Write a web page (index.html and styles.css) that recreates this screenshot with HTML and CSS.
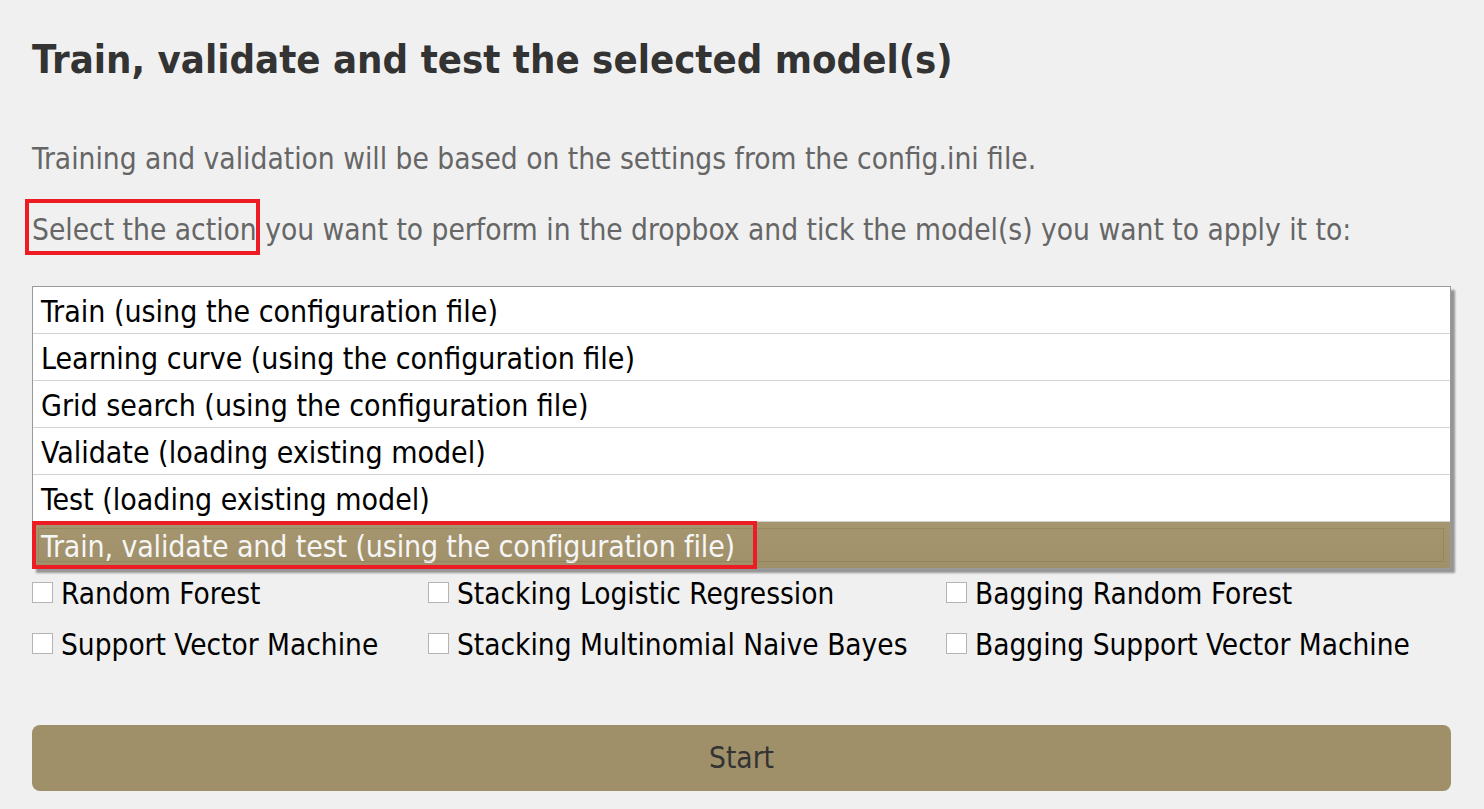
FILE: index.html
```html
<!DOCTYPE html>
<html lang="en">
<head>
<meta charset="utf-8">
<title>Train, validate and test</title>
<link rel="stylesheet" href="styles.css">
</head>
<body>
<div class="page">
  <h1 class="title">Train, validate and test the selected model(s)</h1>
  <p class="intro">Training and validation will be based on the settings from the config.ini file.</p>
  <p class="intro second"><span class="mark">Select the action</span> you want to perform in the dropbox and tick the model(s) you want to apply it to:</p>
  <ul class="actions">
    <li class="action">Train (using the configuration file)</li>
    <li class="action">Learning curve (using the configuration file)</li>
    <li class="action">Grid search (using the configuration file)</li>
    <li class="action">Validate (loading existing model)</li>
    <li class="action">Test (loading existing model)</li>
    <li class="action selected">Train, validate and test (using the configuration file)</li>
  </ul>
  <div class="models">
    <label class="model"><span class="box"></span>Random Forest</label>
    <label class="model"><span class="box"></span>Stacking Logistic Regression</label>
    <label class="model"><span class="box"></span>Bagging Random Forest</label>
    <label class="model"><span class="box"></span>Support Vector Machine</label>
    <label class="model"><span class="box"></span>Stacking Multinomial Naive Bayes</label>
    <label class="model"><span class="box"></span>Bagging Support Vector Machine</label>
  </div>
  <button class="start" type="button">Start</button>
</div>
</body>
</html>
```

FILE: styles.css
```css
html, body {
  margin: 0;
  padding: 0;
  background: #f0f0f0;
}

body {
  font-family: "DejaVu Sans Condensed", "DejaVu Sans", sans-serif;
  font-stretch: semi-condensed;
  font-size: 29.6px;
  color: #000;
}

.page {
  padding: 35px 33px 0 32px;
}

.title {
  margin: 0;
  font-size: 39.75px;
  line-height: 48px;
  font-weight: bold;
  color: #333;
}

.intro {
  margin: 58px 0 0;
  line-height: 36px;
  color: #666;
}

.intro.second {
  margin-top: 35px;
}

.mark {
  position: relative;
}

.mark::after {
  content: "";
  position: absolute;
  left: -7px;
  right: -3px;
  top: -14px;
  bottom: -8px;
  border: 4px solid #ed1c24;
}

.actions {
  list-style: none;
  margin: 38px 0 0;
  padding: 0;
  background: #fff;
  border: 1px solid #9a9a9a;
  box-shadow: 4px 4px 2px rgba(0, 0, 0, 0.38);
  font-size: 30px;
}

.action {
  height: 47px;
  box-sizing: border-box;
  padding: 3px 0 0 8px;
  line-height: 43px;
  border-bottom: 1px solid #d2d2d2;
  white-space: nowrap;
}

.action:last-child {
  height: 46px;
  border-bottom: none;
}

.action.selected {
  position: relative;
  background: linear-gradient(#a5966f, #a0906a);
  color: #f6f6f6;
  letter-spacing: -0.15px;
}

.action.selected::before {
  content: "";
  position: absolute;
  left: 5px;
  right: 6px;
  top: 6px;
  bottom: 6px;
  border: 1px solid rgba(90, 75, 40, 0.18);
}

.action.selected::after {
  content: "";
  position: absolute;
  left: -1px;
  top: -1px;
  width: 725px;
  height: 48px;
  box-sizing: border-box;
  border: 4px solid #ed1c24;
}

.models {
  display: grid;
  grid-template-columns: 396px 518px 1fr;
  font-size: 29.5px;
}

.model {
  display: flex;
  align-items: center;
  gap: 8px;
  line-height: 51px;
  white-space: nowrap;
}

.box {
  width: 21px;
  height: 21px;
  box-sizing: border-box;
  border: 1px solid #b4b4b4;
  background: #fff;
  margin-bottom: 5px;
  flex: none;
}

.start {
  display: block;
  width: 100%;
  height: 66px;
  margin-top: 54px;
  border: none;
  border-radius: 8px;
  background: #a0906a;
  color: #333;
  font-family: inherit;
  font-stretch: semi-condensed;
  font-size: 29.6px;
  padding: 0;
}
```
